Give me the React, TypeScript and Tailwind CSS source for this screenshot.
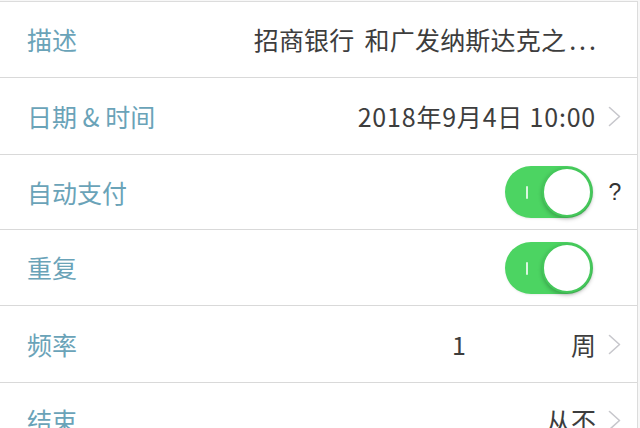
import React from "react";

const FONT = { fontFamily: '"Noto Sans CJK SC", "Noto Sans", sans-serif' };

function Chevron() {
  return (
    <svg width="13" height="21" viewBox="0 0 13 21" fill="none">
      <polyline points="1.5,1.5 11.5,10.5 1.5,19.5" stroke="#c7c7cc" strokeWidth="1.6" strokeLinecap="round" strokeLinejoin="round" />
    </svg>
  );
}

function Toggle() {
  return (
    <div className="relative mr-[3px] h-[52px] w-[88px] rounded-full bg-[#4cd462] shadow-[0_1px_2px_rgba(0,0,0,0.08)]">
      <div className="absolute left-[21px] top-[20px] h-[13px] w-[2px] rounded-sm bg-white/80" />
      <div className="absolute right-[1px] top-[1px] h-[50px] w-[50px] rounded-full border-[2px] border-[#45c85b] bg-white shadow-[0_2px_4px_rgba(0,0,0,0.25)]" />
    </div>
  );
}

type Row = {
  label: string;
  h: number;
  value?: React.ReactNode;
  accessory?: "chevron" | "question" | null;
};

function SettingRow({ label, h, value, accessory }: Row) {
  return (
    <div
      className="flex items-center border-b border-[#d9d9d9] pl-[27px] pr-[11px]"
      style={{ height: h }}
    >
      <div className="text-[25px] leading-none text-[#6aa3b8]">{label}</div>
      <div className="flex-1" />
      <div className="flex items-center whitespace-nowrap text-[25px] leading-none text-[#3d3d3d]">{value}</div>
      <div className="ml-[6px] flex w-[24px] items-center justify-center">
        {accessory === "chevron" && <Chevron />}
        {accessory === "question" && (
          <span className="ml-[2px] text-[23px] leading-none text-[#333]" style={{ fontFamily: '"Liberation Sans", sans-serif' }}>?</span>
        )}
      </div>
    </div>
  );
}

export default function App() {
  return (
    <div className="h-[428px] w-[640px] overflow-hidden bg-[#f7f7f7]" style={FONT}>
      <div className="mt-px w-[638px] border-r border-t border-[#dcdcdc] bg-white">
        <SettingRow
          h={76}
          label="描述"
          value={
            <>
              <span className="tracking-[0.2px]">招商银行</span>
              <span className="ml-[10px] tracking-[0.2px]">和广发纳斯达克之</span>
              <span className="ml-[3px] mr-[-3px] tracking-[3px]">...</span>
            </>
          }
          accessory={null}
        />
        <SettingRow h={77} label="日期 & 时间" value={<span className="tracking-[0.8px]">2018年9月4日 10:00</span>} accessory="chevron" />
        <SettingRow h={75} label="自动支付" value={<Toggle />} accessory="question" />
        <SettingRow h={76} label="重复" value={<Toggle />} accessory={null} />
        <SettingRow
          h={77}
          label="频率"
          value={
            <>
              <span>1</span>
              <span className="ml-[105px]">周</span>
            </>
          }
          accessory="chevron"
        />
        <SettingRow h={76} label="结束" value={<span>从不</span>} accessory="chevron" />
      </div>
    </div>
  );
}
